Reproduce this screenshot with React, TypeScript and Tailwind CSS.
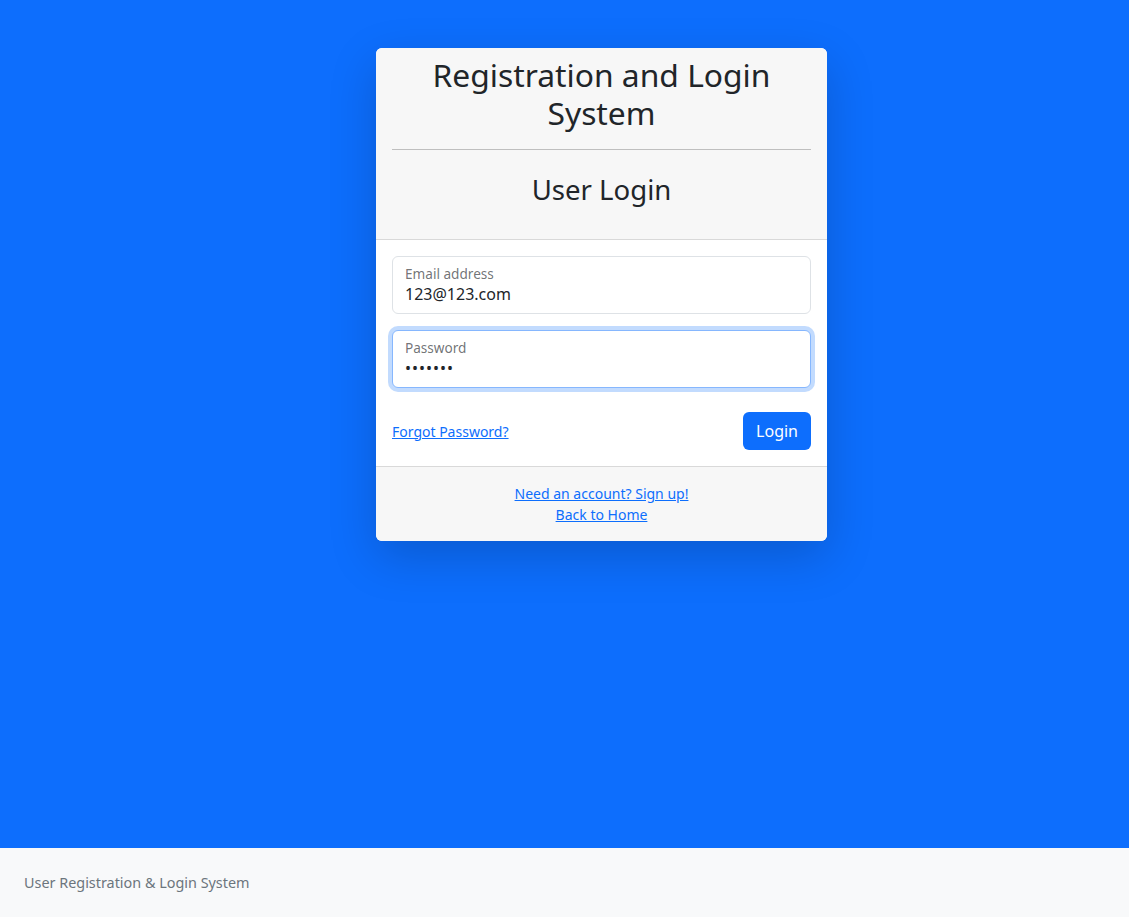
import React from 'react';

const font = { fontFamily: '"Noto Sans", "Open Sans", sans-serif' };

// Floating-label style input box
const FloatingField = ({ label, value, focused, secret }: { label: string; value: string; focused?: boolean; secret?: boolean }) => (
  <div
    className={`h-[58px] rounded-[6px] border bg-white px-[12px] pt-[9px] ${
      focused
        ? 'border-[#86b7fe] shadow-[0_0_0_4px_rgba(13,110,253,0.25)]'
        : 'border-[#dee2e6]'
    }`}
  >
    <div className="text-[13.6px] leading-[16px] text-[#212529a6]">{label}</div>
    <div className={`mt-[1px] text-[16px] leading-[22px] text-[#212529] ${secret ? 'tracking-[1px]' : ''}`}>{value}</div>
  </div>
);

export default function App() {
  return (
    <div className="min-h-[917px] flex flex-col" style={font}>
      <main className="h-[848px] bg-[#0d6efd] pl-[376px] pt-[48px]">
        <div className="w-[451px] rounded-[6px] bg-white shadow-[0_16px_48px_rgba(0,0,0,0.18)] overflow-hidden">
          <div className="bg-[#f7f7f7] border-b border-[#d9d9d9] px-[16px] pt-[8px] pb-[33px] text-center text-[#212529]">
            <h2 className="text-[31.8px] leading-[37.6px] font-normal">Registration and Login System</h2>
            <hr className="mt-[18px] mb-[23px] border-t border-[#bfbfbf]" />
            <h3 className="text-[27.57px] leading-[33px] font-normal">User Login</h3>
          </div>

          <div className="p-[16px]">
            <FloatingField label="Email address" value="123@123.com" />
            <div className="mt-[16px]">
              <FloatingField label="Password" value="•••••••" focused secret />
            </div>
            <div className="mt-[24px] flex items-center justify-between">
              <a href="#" className="text-[14px] text-[#0d6efd] underline">Forgot Password?</a>
              <button className="h-[38px] rounded-[6px] bg-[#0d6efd] px-[13px] text-[16px] text-white">Login</button>
            </div>
          </div>

          <div className="bg-[#f7f7f7] border-t border-[#d9d9d9] py-[16px] text-center text-[14px] leading-[21px]">
            <div><a href="#" className="text-[#0d6efd] underline">Need an account? Sign up!</a></div>
            <div><a href="#" className="text-[#0d6efd] underline">Back to Home</a></div>
          </div>
        </div>
      </main>
      <footer className="h-[69px] bg-[#f8f9fa] px-[24px] flex items-center text-[14.4px] text-[#6c757d]">
        User Registration &amp; Login System
      </footer>
    </div>
  );
}
